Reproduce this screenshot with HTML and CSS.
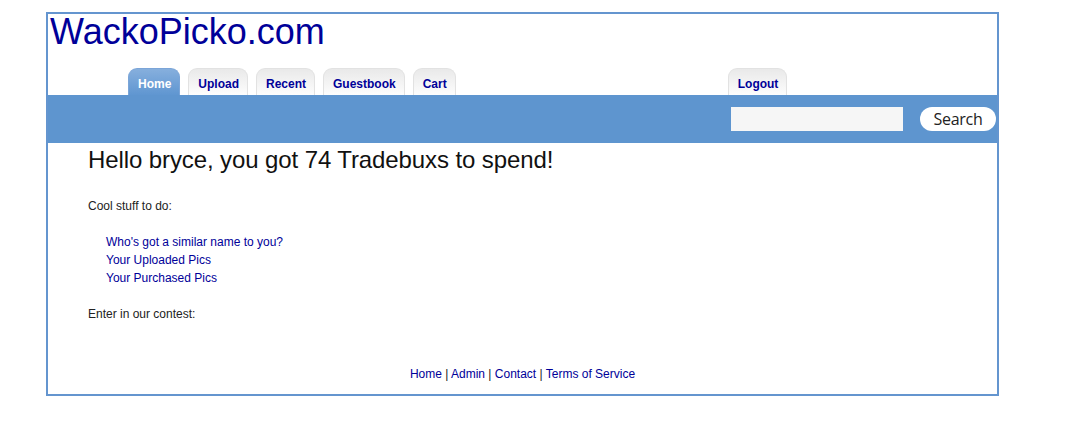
FILE: index.html
```html
<!DOCTYPE html>
<html lang="en">
<head>
    <meta charset="UTF-8">
    <title>WackoPicko.com</title>
    <link rel="stylesheet" href="styles.css">
</head>
<body>
    <div class="container">
        <div class="header">
            <h1><a href="#">WackoPicko.com</a></h1>
        </div>
        <ul class="menu">
            <li class="current"><a href="#">Home</a></li>
            <li><a href="#">Upload</a></li>
            <li><a href="#">Recent</a></li>
            <li><a href="#">Guestbook</a></li>
            <li><a href="#">Cart</a></li>
            <li class="logout"><a href="#">Logout</a></li>
        </ul>
        <div class="bar">
            <form class="search">
                <input type="text" name="query">
                <button type="button">Search</button>
            </form>
        </div>
        <div class="content">
            <h2>Hello bryce, you got 74 Tradebuxs to spend!</h2>
            <p>Cool stuff to do:</p>
            <ul class="todo">
                <li><a href="#">Who's got a similar name to you?</a></li>
                <li><a href="#">Your Uploaded Pics</a></li>
                <li><a href="#">Your Purchased Pics</a></li>
            </ul>
            <p>Enter in our contest:</p>
        </div>
        <div class="footer">
            <a href="#">Home</a> | <a href="#">Admin</a> | <a href="#">Contact</a> | <a href="#">Terms of Service</a>
        </div>
    </div>
</body>
</html>
```

FILE: styles.css
```css
body{
    margin: 0;
    padding: 0;
    background-color: #fff;
    font-family: "Liberation Sans", Arial, sans-serif;
    font-size: 12px;
    color: #222;
}
a{
    color: #000099;
    text-decoration: none;
}
ul,li{
    list-style: none;
    padding: 0;
    margin: 0;
}
.container{
    margin-left: 46px;
    margin-top: 12px;
    width: 949px;
    border: 2px solid #6495cf;
}
.header h1{
    margin: 0;
    padding-left: 2px;
    font-size: 36px;
    font-weight: normal;
    line-height: 36px;
}
.menu{
    display: flex;
    padding-left: 80px;
    margin-top: 18px;
    height: 27px;
}
.menu li{
    margin-right: 8px;
    height: 27px;
    box-sizing: border-box;
    padding: 3px 8px 0 9px;
    line-height: 24px;
    font-weight: bold;
    border: 1px solid #e2e2e2;
    border-bottom: none;
    border-radius: 9px 9px 0 0;
    background: linear-gradient(#e9e9e9, #fdfdfd);
}
.menu li.current{
    border-color: #7ba5d8;
    background: linear-gradient(#86afdd, #5f96d1);
}
.menu li.current a{
    color: #fff;
}
.menu li.logout{
    margin-left: 264px;
}
.bar{
    height: 48px;
    background-color: #5e95cf;
    display: flex;
    justify-content: flex-end;
    align-items: center;
}
.search{
    display: flex;
    align-items: center;
    margin-right: 1px;
}
.search input{
    width: 172px;
    height: 24px;
    box-sizing: border-box;
    border: none;
    background-color: #f6f6f6;
    margin: 0 17px 0 0;
}
.search button{
    width: 76px;
    height: 24px;
    border: none;
    border-radius: 12px;
    background-color: #fff;
    font-family: "Open Sans", "DejaVu Sans", sans-serif;
    font-size: 16px;
    letter-spacing: -0.3px;
    line-height: 22px;
    color: #222;
    padding: 0;
}
.content{
    padding-left: 40px;
    padding-top: 2px;
}
.content h2{
    margin: 0 0 22px 0;
    font-size: 24px;
    font-weight: normal;
    line-height: 30px;
    letter-spacing: -0.1px;
    color: #111;
}
.content p{
    margin: 0;
    line-height: 18px;
}
.todo{
    margin: 18px 0 18px 18px;
}
.todo li{
    line-height: 18px;
}
.footer{
    text-align: center;
    line-height: 18px;
    margin-top: 42px;
    padding-bottom: 11px;
}
```
